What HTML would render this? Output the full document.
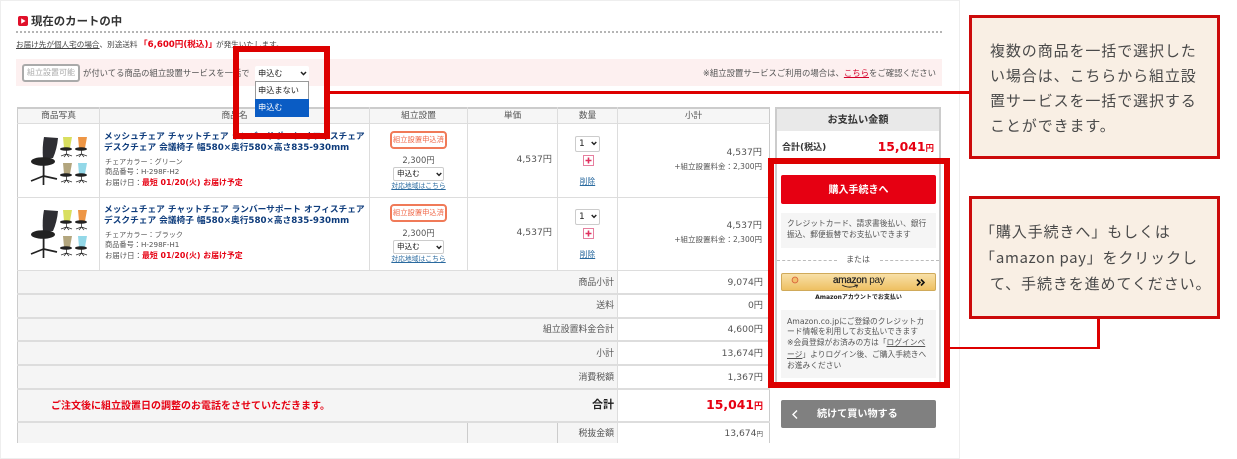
<!DOCTYPE html>
<html lang="ja"><head><meta charset="utf-8"><title>現在のカートの中</title>
<style>
html,body{margin:0;padding:0;background:#fff}
#p{position:relative;width:1237px;height:459px;overflow:hidden;background:#fff;font-family:"DejaVu Sans","Noto Sans CJK JP",sans-serif;color:#555}
#p div,#p span.a,#p svg{position:absolute}
.t{white-space:nowrap;line-height:14px;height:14px;font-size:8px}
.r{text-align:right}
.c{text-align:center}
.b{font-weight:bold}
.red{color:#e60012}
.n{font-family:"Noto Sans CJK JP",sans-serif}
.u{text-decoration:underline}
.lnk{color:#2a6a9f;text-decoration:underline}
.bx{box-sizing:border-box}
.hl{background:#ddd}
.rd{background:#dd0000}
.sel{box-sizing:border-box;border:1px solid #ccc;border-radius:2px;background:#fff}
.co{box-sizing:border-box;left:969px;width:251px;background:#f9efe4;border:3px solid #cc0a0a}
.ct{left:990px;font-size:15px;letter-spacing:.9px;line-height:25px;height:25px;white-space:nowrap;color:#4a4a4a;font-family:"Noto Sans CJK JP",sans-serif}
.badge{box-sizing:border-box;border:2px solid #f07a58;border-radius:4px;background:#fff;color:#f0694a;font-size:7.3px;text-align:center;line-height:14px;white-space:nowrap}
.title{font-size:8.7px;font-weight:bold;color:#0e3c7c}
.lb{left:400px;width:214px;font-size:8.9px}
.vl{left:618px;width:145px;font-size:9.2px}
.nt{left:787px;font-size:7.75px}
</style></head><body>
<div id="p">
<!-- page frame -->
<div style="left:0;top:0;width:960px;height:1px;background:#eee"></div>
<div style="left:0;top:0;width:1px;height:459px;background:#eee"></div>
<div style="left:959px;top:0;width:1px;height:459px;background:#eee"></div>
<div style="left:0;top:458px;width:960px;height:1px;background:#eee"></div>

<!-- title -->
<svg style="left:18px;top:16px" width="10" height="10" viewBox="0 0 10 10"><rect width="10" height="10" rx="2" fill="#e0102a"/><path d="M3.2 2.4L7.6 5L3.2 7.6Z" fill="#fff"/></svg>
<div class="t b n" style="left:31px;top:14px;font-size:11.4px;color:#333">現在のカートの中</div>
<div style="left:16px;top:31px;width:926px;height:0;border-top:2px dotted #b5b5b5"></div>

<div class="t" style="left:16px;top:38px;font-size:7.6px;color:#444"><span class="u">お届け先が個人宅の場合</span>、別途送料</div>
<div class="t b red" style="left:139px;top:38px;font-size:8.6px">「6,600円(税込)」</div>
<div class="t" style="left:216px;top:38px;font-size:7.6px;color:#444">が発生いたします。</div>

<!-- pink bar -->
<div style="left:16px;top:59px;width:926px;height:27px;background:#fdf0f0"></div>
<div class="bx" style="left:22px;top:64px;width:58px;height:18px;border:2px solid #aaa;border-radius:3px;background:#fff;color:#aaa;font-size:8px;text-align:center;line-height:14px;white-space:nowrap">組立設置可能</div>
<div class="t" style="left:83px;top:66px;font-size:8.35px;color:#555">が付いてる商品の組立設置サービスを一括で</div>
<div class="t r" style="right:301px;top:66px;font-size:8.4px;color:#555">※組立設置サービスご利用の場合は、<span class="u" style="color:#d4002a">こちら</span>をご確認ください</div>

<!-- main table -->
<div style="left:17px;top:107px;width:753px;height:336px;background:#fff"></div>
<div style="left:17px;top:107px;width:753px;height:17px;background:#f6f6f6"></div>
<div style="left:17px;top:270px;width:600px;height:173px;background:#f5f5f5"></div>
<div style="left:17px;top:107px;width:753px;height:2px;background:#ccc"></div>
<div style="left:17px;top:107px;width:1px;height:336px;background:#ccc"></div>
<div style="left:769px;top:107px;width:1px;height:336px;background:#ccc"></div>
<div class="hl" style="left:17px;top:123px;width:753px;height:1px"></div>
<div class="hl" style="left:17px;top:197px;width:753px;height:1px"></div>
<div class="hl" style="left:17px;top:270px;width:753px;height:1px"></div>
<div class="hl" style="left:17px;top:293px;width:753px;height:2px"></div>
<div class="hl" style="left:17px;top:317px;width:753px;height:2px"></div>
<div class="hl" style="left:17px;top:340px;width:753px;height:2px"></div>
<div class="hl" style="left:17px;top:364px;width:753px;height:2px"></div>
<div class="hl" style="left:17px;top:388px;width:753px;height:2px"></div>
<div class="hl" style="left:17px;top:421px;width:753px;height:2px"></div>
<div class="hl" style="left:99px;top:107px;width:1px;height:163px"></div>
<div class="hl" style="left:369px;top:107px;width:1px;height:163px"></div>
<div class="hl" style="left:467px;top:107px;width:1px;height:163px"></div>
<div class="hl" style="left:557px;top:107px;width:1px;height:163px"></div>
<div class="hl" style="left:617px;top:107px;width:1px;height:336px"></div>
<div style="left:467px;top:423px;width:1px;height:20px;background:#ccc"></div>
<div style="left:557px;top:423px;width:1px;height:20px;background:#ccc"></div>

<!-- header labels -->
<div class="t c" style="left:18px;width:81px;top:109px;font-size:8.7px">商品写真</div>
<div class="t c" style="left:100px;width:269px;top:109px;font-size:8.7px">商品名</div>
<div class="t c" style="left:370px;width:97px;top:109px;font-size:8.7px">組立設置</div>
<div class="t c" style="left:468px;width:89px;top:109px;font-size:8.7px">単価</div>
<div class="t c" style="left:558px;width:59px;top:109px;font-size:8.7px">数量</div>
<div class="t c" style="left:618px;width:151px;top:109px;font-size:8.7px">小計</div>

<!-- chairs -->
<svg style="left:20px;top:125px" width="90" height="70" viewBox="0 0 90 70">
<defs>
<g id="big" stroke="#222" fill="#222">
<path d="M24 12L38 13Q37 24 33 33L23 34Q22 22 24 12Z" fill="#2e2e33" stroke="none"/>
<ellipse cx="23" cy="36.5" rx="12" ry="4.3" stroke="none"/>
<rect x="22.7" y="40" width="1.8" height="11" stroke="none"/>
<path d="M23.5 51L11 56M23.5 51L16 54M23.5 51L23.5 60M23.5 51L37 54" stroke-width="1.7" fill="none"/>
</g>
<g id="sm">
<path d="M3 0L12 0L10 11L4 11Z" fill="currentColor"/>
<ellipse cx="6" cy="12" rx="6" ry="1.8" fill="#222"/>
<path d="M6.5 13.5V17M6.5 17L1 19M6.5 17L4 20M6.5 17L9 20M6.5 17L12 19" stroke="#333" stroke-width=".8" fill="none"/>
</g>
</defs>
<use href="#big"/>
<use href="#sm" x="40" y="12" style="color:#d9df5f"/>
<use href="#sm" x="55" y="12" style="color:#ee9645"/>
<use href="#sm" x="40" y="38" style="color:#b3a67e"/>
<use href="#sm" x="55" y="38" style="color:#93d8e8"/>
</svg>
<svg style="left:20px;top:198px" width="90" height="70" viewBox="0 0 90 70">
<use href="#big"/>
<use href="#sm" x="40" y="12" style="color:#d9df5f"/>
<use href="#sm" x="55" y="12" style="color:#ee9645"/>
<use href="#sm" x="40" y="38" style="color:#b3a67e"/>
<use href="#sm" x="55" y="38" style="color:#93d8e8"/>
</svg>

<!-- row 1 -->
<div class="t title" style="left:104px;top:130px">メッシュチェア チャットチェア ランバーサポート オフィスチェア</div>
<div class="t title" style="left:104px;top:141px">デスクチェア 会議椅子 幅580×奥行580×高さ835-930mm</div>
<div class="t" style="left:105px;top:155px;font-size:7.1px">チェアカラー：グリーン</div>
<div class="t" style="left:105px;top:165px;font-size:7.2px">商品番号：H-298F-H2</div>
<div class="t" style="left:105px;top:176px;font-size:7.4px">お届け日：<span class="b red" style="font-size:7.9px">最短 01/20(火) お届け予定</span></div>
<div class="badge" style="left:390px;top:131px;width:57px;height:18px">組立設置申込済</div>
<div class="t c" style="left:370px;width:97px;top:153px;font-size:8.4px">2,300円</div>
<div class="sel" style="left:393px;top:167px;width:51px;height:14px"></div>
<div class="t" style="left:397px;top:167px;font-size:7.6px;color:#222">申込む</div>
<svg style="left:436px;top:172px" width="6" height="5" viewBox="0 0 6 5"><path d="M.7 1L3 3.4L5.3 1" stroke="#222" stroke-width="1.4" fill="none"/></svg>
<div class="t c lnk" style="left:370px;width:97px;top:179px;font-size:6.8px">対応地域はこちら</div>
<div class="t r" style="left:468px;width:84px;top:153px;font-size:9.2px">4,537円</div>
<div class="sel" style="left:575px;top:136px;width:25px;height:16px"></div>
<div class="t" style="left:579px;top:137px;font-size:9px;color:#222">1</div>
<svg style="left:591px;top:141px" width="6" height="5" viewBox="0 0 6 5"><path d="M.7 1L3 3.4L5.3 1" stroke="#222" stroke-width="1.4" fill="none"/></svg>
<svg style="left:583px;top:155px" width="11" height="11" viewBox="0 0 11 11"><rect x=".5" y=".5" width="10" height="10" fill="#fff" stroke="#e67f9f"/><path d="M5.5 2.5V8.5M2.5 5.5H8.5" stroke="#e0305f" stroke-width="1.6"/></svg>
<div class="t c lnk" style="left:558px;width:59px;top:175px;font-size:7.7px">削除</div>
<div class="t r" style="left:618px;width:144px;top:146px;font-size:9.2px">4,537円</div>
<div class="t r" style="left:618px;width:144px;top:160px;font-size:7.5px">+組立設置料金：2,300円</div>

<!-- row 2 -->
<div class="t title" style="left:104px;top:203px">メッシュチェア チャットチェア ランバーサポート オフィスチェア</div>
<div class="t title" style="left:104px;top:214px">デスクチェア 会議椅子 幅580×奥行580×高さ835-930mm</div>
<div class="t" style="left:105px;top:228px;font-size:7.1px">チェアカラー：ブラック</div>
<div class="t" style="left:105px;top:238px;font-size:7.2px">商品番号：H-298F-H1</div>
<div class="t" style="left:105px;top:249px;font-size:7.4px">お届け日：<span class="b red" style="font-size:7.9px">最短 01/20(火) お届け予定</span></div>
<div class="badge" style="left:390px;top:204px;width:57px;height:18px">組立設置申込済</div>
<div class="t c" style="left:370px;width:97px;top:226px;font-size:8.4px">2,300円</div>
<div class="sel" style="left:393px;top:240px;width:51px;height:14px"></div>
<div class="t" style="left:397px;top:240px;font-size:7.6px;color:#222">申込む</div>
<svg style="left:436px;top:245px" width="6" height="5" viewBox="0 0 6 5"><path d="M.7 1L3 3.4L5.3 1" stroke="#222" stroke-width="1.4" fill="none"/></svg>
<div class="t c lnk" style="left:370px;width:97px;top:252px;font-size:6.8px">対応地域はこちら</div>
<div class="t r" style="left:468px;width:84px;top:226px;font-size:9.2px">4,537円</div>
<div class="sel" style="left:575px;top:209px;width:25px;height:16px"></div>
<div class="t" style="left:579px;top:210px;font-size:9px;color:#222">1</div>
<svg style="left:591px;top:214px" width="6" height="5" viewBox="0 0 6 5"><path d="M.7 1L3 3.4L5.3 1" stroke="#222" stroke-width="1.4" fill="none"/></svg>
<svg style="left:583px;top:228px" width="11" height="11" viewBox="0 0 11 11"><rect x=".5" y=".5" width="10" height="10" fill="#fff" stroke="#e67f9f"/><path d="M5.5 2.5V8.5M2.5 5.5H8.5" stroke="#e0305f" stroke-width="1.6"/></svg>
<div class="t c lnk" style="left:558px;width:59px;top:248px;font-size:7.7px">削除</div>
<div class="t r" style="left:618px;width:144px;top:219px;font-size:9.2px">4,537円</div>
<div class="t r" style="left:618px;width:144px;top:233px;font-size:7.5px">+組立設置料金：2,300円</div>

<!-- summary -->
<div class="t r lb" style="top:276px">商品小計</div>
<div class="t r vl" style="top:276px">9,074円</div>
<div class="t r lb" style="top:299px">送料</div>
<div class="t r vl" style="top:299px">0円</div>
<div class="t r lb" style="top:323px">組立設置料金合計</div>
<div class="t r vl" style="top:323px">4,600円</div>
<div class="t r lb" style="top:347px">小計</div>
<div class="t r vl" style="top:347px">13,674円</div>
<div class="t r lb" style="top:371px">消費税額</div>
<div class="t r vl" style="top:371px">1,367円</div>
<div class="t b red n" style="left:51px;top:398px;font-size:10px">ご注文後に組立設置日の調整のお電話をさせていただきます。</div>
<div class="t r b" style="left:400px;width:214px;top:398px;font-size:11px;color:#222">合計</div>
<div class="t r b red" style="left:618px;width:145px;top:398px;font-size:12.4px">15,041<span style="font-size:9px">円</span></div>
<div class="t r lb" style="top:427px">税抜金額</div>
<div class="t r vl" style="top:427px">13,674<span style="font-size:6.5px">円</span></div>

<!-- side panel -->
<div class="bx" style="left:775px;top:107px;width:166px;height:281px;border:2px solid #ccc;border-bottom:0;background:#fff"></div>
<div style="left:777px;top:109px;width:162px;height:22px;background:#e9e9e9"></div>
<div class="t c b n" style="left:775px;width:166px;top:112px;font-size:10.2px;color:#333">お支払い金額</div>
<div class="t b" style="left:782px;top:141px;font-size:9px;color:#333">合計(税込)</div>
<div class="t r b red" style="left:800px;width:134px;top:140px;font-size:12.4px">15,041<span style="font-size:8.5px">円</span></div>
<div style="left:781px;top:175px;width:155px;height:29px;background:#e60012;border-radius:2px"></div>
<div class="t c b n" style="left:781px;width:155px;top:182px;font-size:10px;color:#fff">購入手続きへ</div>
<div style="left:781px;top:213px;width:155px;height:35px;background:#f5f5f5"></div>
<div class="t nt" style="top:217px">クレジットカード、請求書後払い、銀行</div>
<div class="t nt" style="top:228px">振込、郵便振替でお支払いできます</div>
<div style="left:777px;top:260px;width:60px;height:0;border-top:1px dashed #bbb"></div>
<div style="left:880px;top:260px;width:59px;height:0;border-top:1px dashed #bbb"></div>
<div class="t c" style="left:775px;width:166px;top:253px;font-size:7.9px">または</div>

<!-- amazon -->
<div class="bx" style="left:781px;top:273px;width:155px;height:18px;background:linear-gradient(#f8e0a8,#eec062);border:1px solid #d0aa5a;border-radius:2px"></div>
<svg style="left:791px;top:276px" width="8" height="8" viewBox="0 0 8 8"><circle cx="4" cy="4" r="2.9" fill="#f3bf6a" stroke="#d8643c" stroke-width=".9"/></svg>
<div class="t" style="left:833px;top:274px;font-size:10px;color:#222;font-family:'Liberation Sans',sans-serif;letter-spacing:-.3px"><span style="-webkit-text-stroke:.25px #222">amazon</span> pay</div>
<svg style="left:840px;top:284px" width="20" height="6" viewBox="0 0 20 6"><path d="M2 1Q9 5 17 1.5M14.5 1L17.5 1.2L16.5 3.6" stroke="#222" stroke-width=".9" fill="none"/></svg>
<svg style="left:916px;top:278px" width="9" height="9" viewBox="0 0 9 9"><path d="M1 1.5L4 4.5L1 7.5M5 1.5L8 4.5L5 7.5" stroke="#111" stroke-width="1.6" fill="none"/></svg>
<div class="t c b" style="left:781px;width:155px;top:291px;font-size:6px;color:#222">Amazonアカウントでお支払い</div>
<div style="left:781px;top:310px;width:155px;height:68px;background:#f5f5f5"></div>
<div class="t nt" style="top:315px">Amazon.co.jpにご登録のクレジットカ</div>
<div class="t nt" style="top:325px">ード情報を利用してお支払いできます</div>
<div class="t nt" style="top:336px">※会員登録がお済みの方は「<span class="u">ログインペ</span></div>
<div class="t nt" style="top:348px"><span class="u">ージ</span>」よりログイン後、ご購入手続きへ</div>
<div class="t nt" style="top:359px">お進みください</div>

<!-- continue btn -->
<div style="left:781px;top:400px;width:155px;height:28px;background:#808080;border-radius:2px"></div>
<svg style="left:791px;top:409px" width="8" height="11" viewBox="0 0 8 11"><path d="M6 1.5L2 5.5L6 9.5" stroke="#fff" stroke-width="1.4" fill="none"/></svg>
<div class="t b n" style="left:817px;top:406px;font-size:10.1px;color:#fff">続けて買い物する</div>

<!-- select + dropdown -->
<div style="left:255px;top:66px;width:54px;height:15px;background:#fff;border-radius:2px"></div>
<div class="t" style="left:258px;top:66px;font-size:8.2px;color:#222">申込む</div>
<svg style="left:300px;top:71px" width="7" height="5" viewBox="0 0 7 5"><path d="M1 1L3.5 3.6L6 1" stroke="#222" stroke-width="1.5" fill="none"/></svg>
<div class="bx" style="left:255px;top:81px;width:54px;height:36px;background:#fff;border:1px solid #999"></div>
<div class="t" style="left:258px;top:83px;font-size:8.2px;color:#222">申込まない</div>
<div style="left:255px;top:99px;width:54px;height:18px;background:#0a5cc4"></div>
<div class="t" style="left:258px;top:100px;font-size:8.2px;color:#fff">申込む</div>

<!-- red annotations -->
<div class="bx" style="left:233px;top:46px;width:97px;height:93px;border:6px solid #dd0000"></div>
<div class="rd" style="left:330px;top:91px;width:640px;height:3px"></div>
<div class="bx" style="left:768px;top:158px;width:182px;height:230px;border:6px solid #dd0000"></div>
<div class="rd" style="left:950px;top:347px;width:150px;height:2px"></div>
<div class="rd" style="left:1097px;top:318px;width:3px;height:31px"></div>

<!-- callouts -->
<div class="co" style="top:15px;height:144px"></div>
<div class="ct" style="top:38px">複数の商品を一括で選択した</div>
<div class="ct" style="top:63px">い場合は、こちらから組立設</div>
<div class="ct" style="top:88px">置サービスを一括で選択する</div>
<div class="ct" style="top:113px">ことができます。</div>
<div class="co" style="top:196px;height:123px"></div>
<div class="ct" style="top:219px;left:980px">「購入手続きへ」もしくは</div>
<div class="ct" style="top:245px;left:980px">「<span style="letter-spacing:.6px">amazon pay</span>」をクリックし</div>
<div class="ct" style="top:271px">て、手続きを進めてください。</div>
</div>
</body></html>
